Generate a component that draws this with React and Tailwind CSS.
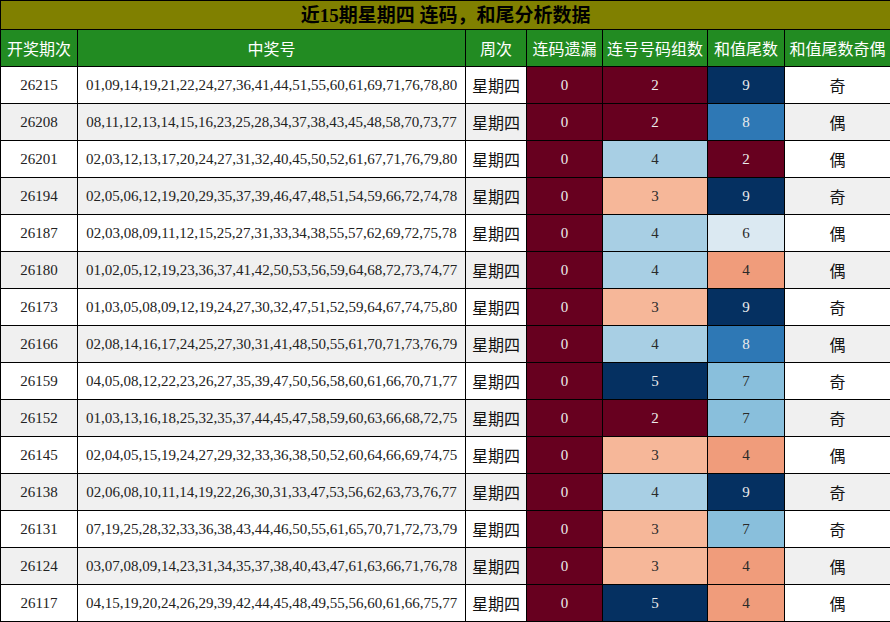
import React from "react";

const rows = [
  ["26215", "01,09,14,19,21,22,24,27,36,41,44,51,55,60,61,69,71,76,78,80", 2, 9, "奇"],
  ["26208", "08,11,12,13,14,15,16,23,25,28,34,37,38,43,45,48,58,70,73,77", 2, 8, "偶"],
  ["26201", "02,03,12,13,17,20,24,27,31,32,40,45,50,52,61,67,71,76,79,80", 4, 2, "偶"],
  ["26194", "02,05,06,12,19,20,29,35,37,39,46,47,48,51,54,59,66,72,74,78", 3, 9, "奇"],
  ["26187", "02,03,08,09,11,12,15,25,27,31,33,34,38,55,57,62,69,72,75,78", 4, 6, "偶"],
  ["26180", "01,02,05,12,19,23,36,37,41,42,50,53,56,59,64,68,72,73,74,77", 4, 4, "偶"],
  ["26173", "01,03,05,08,09,12,19,24,27,30,32,47,51,52,59,64,67,74,75,80", 3, 9, "奇"],
  ["26166", "02,08,14,16,17,24,25,27,30,31,41,48,50,55,61,70,71,73,76,79", 4, 8, "偶"],
  ["26159", "04,05,08,12,22,23,26,27,35,39,47,50,56,58,60,61,66,70,71,77", 5, 7, "奇"],
  ["26152", "01,03,13,16,18,25,32,35,37,44,45,47,58,59,60,63,66,68,72,75", 2, 7, "奇"],
  ["26145", "02,04,05,15,19,24,27,29,32,33,36,38,50,52,60,64,66,69,74,75", 3, 4, "偶"],
  ["26138", "02,06,08,10,11,14,19,22,26,30,31,33,47,53,56,62,63,73,76,77", 4, 9, "奇"],
  ["26131", "07,19,25,28,32,33,36,38,43,44,46,50,55,61,65,70,71,72,73,79", 3, 7, "奇"],
  ["26124", "03,07,08,09,14,23,31,34,35,37,38,40,43,47,61,63,66,71,76,78", 3, 4, "偶"],
  ["26117", "04,15,19,20,24,26,29,39,42,44,45,48,49,55,56,60,61,66,75,77", 5, 4, "偶"],
];

const groupCls = {
  2: "bg-[#67001f] text-[#ececec]",
  3: "bg-[#f6b799] text-[#2a2a2a]",
  4: "bg-[#a8cfe4] text-[#2a2a2a]",
  5: "bg-[#053061] text-[#ececec]",
};

const tailCls = {
  2: "bg-[#67001f] text-[#ececec]",
  4: "bg-[#f09c7b] text-[#2a2a2a]",
  6: "bg-[#dbe9f2] text-[#2a2a2a]",
  7: "bg-[#89bfdc] text-[#2a2a2a]",
  8: "bg-[#2e78b5] text-[#ececec]",
  9: "bg-[#053061] text-[#ececec]",
};

const headers = ["开奖期次", "中奖号", "周次", "连码遗漏", "连号号码组数", "和值尾数", "和值尾数奇偶"];

export default function App() {
  return (
    <div className="w-[890px] h-[622px] bg-white overflow-hidden">
      <table
        className="w-[890px] table-fixed border-collapse"
        style={{ fontFamily: '"Liberation Serif", "Noto Sans CJK SC", serif' }}
      >
        <colgroup>
          <col className="w-[77px]" />
          <col className="w-[388px]" />
          <col className="w-[61px]" />
          <col className="w-[76px]" />
          <col className="w-[105px]" />
          <col className="w-[77px]" />
          <col className="w-[106px]" />
        </colgroup>
        <thead>
          <tr className="h-[29px]">
            <th
              colSpan={7}
              className="border border-black bg-[#808000] text-black text-[19px] font-bold leading-none p-0"
            >
              近15期星期四 连码，和尾分析数据
            </th>
          </tr>
          <tr className="h-[37px]">
            {headers.map((h) => (
              <th
                key={h}
                className="border border-black bg-[#228b22] text-white text-[16px] font-normal p-0"
                style={{ fontFamily: '"Noto Sans CJK SC", sans-serif' }}
              >
                {h}
              </th>
            ))}
          </tr>
        </thead>
        <tbody>
          {rows.map((r, i) => {
            const bg = i % 2 === 1 ? "bg-[#f0f0f0]" : "bg-white";
            return (
              <tr key={r[0]} className="h-[37px]">
                <td className={`border border-black text-center text-[15px] text-[#222] p-0 ${bg}`}>{r[0]}</td>
                <td className={`border border-black text-center text-[15px] text-[#222] p-0 whitespace-nowrap ${bg}`}>{r[1]}</td>
                <td
                  className={`border border-black text-center text-[16px] text-[#111] p-0 ${bg}`}
                  style={{ fontFamily: '"Noto Sans CJK SC", sans-serif' }}
                >
                  星期四
                </td>
                <td className="border border-black text-center text-[15px] p-0 bg-[#67001f] text-[#ececec]">0</td>
                <td className={`border border-black text-center text-[15px] p-0 ${groupCls[r[2]]}`}>{r[2]}</td>
                <td className={`border border-black text-center text-[15px] p-0 ${tailCls[r[3]]}`}>{r[3]}</td>
                <td
                  className={`border border-black text-center text-[16px] text-[#111] p-0 ${bg}`}
                  style={{ fontFamily: '"Noto Sans CJK SC", sans-serif' }}
                >
                  {r[4]}
                </td>
              </tr>
            );
          })}
        </tbody>
      </table>
    </div>
  );
}
